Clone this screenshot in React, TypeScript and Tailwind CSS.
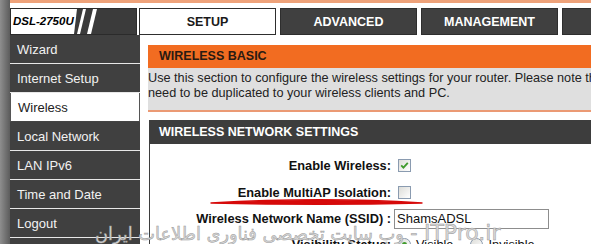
const menu = [
  "Wizard",
  "Internet Setup",
  "Wireless",
  "Local Network",
  "LAN IPv6",
  "Time and Date",
  "Logout",
  "",
];

const tabs = ["SETUP", "ADVANCED", "MANAGEMENT", "STATUS"];

function Logo() {
  return (
    <div className="w-[127px] h-[27px] border border-[#2b2b2b] bg-[#3b3b3b] relative overflow-hidden shrink-0">
      <svg width="125" height="25" className="absolute left-0 top-0">
        <polygon points="0,0 66,0 63,25 0,25" fill="#ffffff" />
        <polygon points="72,0 75,0 69,25 66,25" fill="#ffffff" />
        <polygon points="82,0 86,0 80,25 76,25" fill="#ffffff" />
      </svg>
      <span className="absolute left-[2px] top-[5px] text-[11.5px] leading-[14px] font-bold italic text-black">
        DSL-2750U
      </span>
    </div>
  );
}

function Checkbox({ checked }: { checked?: boolean }) {
  return (
    <div className="ml-[4px] w-[13px] h-[13px] border border-[#8a9bb0] bg-gradient-to-br from-[#dcdcd8] to-[#ffffff] flex items-center justify-center">
      {checked && (
        <svg width="9" height="9" viewBox="0 0 9 9">
          <path d="M1.2 4.4 L3.4 6.6 L7.8 1.8" stroke="#3f9a2c" strokeWidth="1.8" fill="none" />
        </svg>
      )}
    </div>
  );
}

function Radio({ on }: { on?: boolean }) {
  return (
    <div className="w-[13px] h-[13px] rounded-full border border-[#8a9bb0] bg-gradient-to-br from-[#dcdcd8] to-white flex items-center justify-center">
      {on && <div className="w-[5px] h-[5px] rounded-full bg-[#3f9a2c]" />}
    </div>
  );
}

export default function App() {
  return (
    <div className="relative w-[591px] h-[244px] overflow-hidden bg-white flex font-['Liberation_Sans',Arial,sans-serif]">
      <div className="w-[10px] shrink-0 bg-gradient-to-r from-[#8e8e8e] to-[#5c5c5c]" />

      <div className="flex-1 min-w-0 flex flex-col">
        <div className="h-[3px] bg-[#eea27a]" />
        <div className="h-[5px]" />

        {/* logo + tabs */}
        <div className="flex h-[27px] whitespace-nowrap">
          <Logo />
          <div className="flex gap-[4px] ml-[2px]">
            {tabs.map((t, i) => (
              <div
                key={t}
                className={`w-[137px] shrink-0 flex items-center justify-center pt-[2px] text-[12.5px] font-bold border ${
                  i === 0
                    ? "bg-white text-[#1a1a1a] border-[#2e2e2e]"
                    : "bg-[#404040] text-white border-[#2e2e2e]"
                }`}
              >
                {t}
              </div>
            ))}
          </div>
        </div>

        <div className="flex flex-1 min-h-0">
          {/* side menu */}
          <div className="w-[131px] shrink-0 flex flex-col bg-[#404040] border-r border-white">
            {menu.map((m, i) => (
              <div
                key={i}
                className={`h-[29px] shrink-0 flex items-center pl-[7px] pt-[2px] text-[13px] border-b ${
                  m === "Wireless"
                    ? "bg-white text-[#222] border-x border-x-[#555] border-b-[#444]"
                    : "text-[#f2f2f2] border-b-[#e8e8e8]"
                }`}
              >
                {m}
              </div>
            ))}
          </div>

          {/* content */}
          <div className="flex-1 min-w-0 ml-[7px] pt-[10px] whitespace-nowrap">
            <div className="h-[23px] bg-[#f26c21] flex items-center pl-[11px] text-[12.5px] font-bold text-[#2a1a12]">
              WIRELESS BASIC
            </div>
            <div className="h-[44px] bg-[#dfdfdf] border-b-2 border-[#eb9a74] pt-[3px] text-[12.7px] leading-[15px] text-[#222]">
              Use this section to configure the wireless settings for your router. Please note that changes made on this section may also
              <br />
              need to be duplicated to your wireless clients and PC.
            </div>

            <div className="mt-[8px] ml-[1px]">
              <div className="h-[24px] bg-[#3d3d3d] flex items-center pl-[10px] text-[12.5px] font-bold text-white">
                WIRELESS NETWORK SETTINGS
              </div>
              <div className="border-l border-[#3d3d3d] pt-[8px] text-[12.8px] text-[#111]">
                <div className="h-[27px] flex items-center">
                  <div className="w-[241px] text-right font-bold">Enable Wireless:</div>
                  <div className="ml-[3px]">
                    <Checkbox checked />
                  </div>
                </div>
                <div className="h-[27px] flex items-center">
                  <div className="w-[241px] text-right font-bold">Enable MultiAP Isolation:</div>
                  <div className="ml-[3px]">
                    <Checkbox />
                  </div>
                </div>
                <div className="h-[25px] flex items-center">
                  <div className="w-[241px] text-right font-bold">Wireless Network Name (SSID) :</div>
                  <div className="ml-[3px] w-[155px] h-[20px] border border-[#8d8d8d] flex items-center pl-[2px] text-[13px] text-[#111]">
                    ShamsADSL
                  </div>
                </div>
                <div className="h-[27px] flex items-center">
                  <div className="w-[241px] text-right font-bold">Visibility Status:</div>
                  <div className="ml-[7px] flex items-center gap-[5px]">
                    <Radio on />
                    <span>Visible</span>
                    <div className="ml-[12px]">
                      <Radio />
                    </div>
                    <span>Invisible</span>
                  </div>
                </div>
              </div>
            </div>
          </div>
        </div>
      </div>

      {/* red annotation underline */}
      <svg className="absolute left-0 top-0 pointer-events-none" width="591" height="244">
        <path
          d="M211,203 C280,199 360,199 422,203 C360,204.6 280,204.6 211,203 Z"
          fill="#d60a0a"
          stroke="#d60a0a"
          strokeWidth="1.4"
          strokeLinejoin="round"
        />
      </svg>

      {/* watermark */}
      <div
        dir="ltr"
        className="absolute left-[95px] top-[220px] whitespace-nowrap font-['DejaVu_Sans',sans-serif] text-[#d9d9d9] [-webkit-text-stroke:0.5px_#999] pointer-events-none leading-[26px]"
      >
        <span className="text-[17.8px]">وب سایت تخصصی فناوری اطلاعات ایران</span>
        <span className="text-[20px]"> - </span>
        <span className="text-[22px]">ITPro.ir</span>
      </div>
    </div>
  );
}
